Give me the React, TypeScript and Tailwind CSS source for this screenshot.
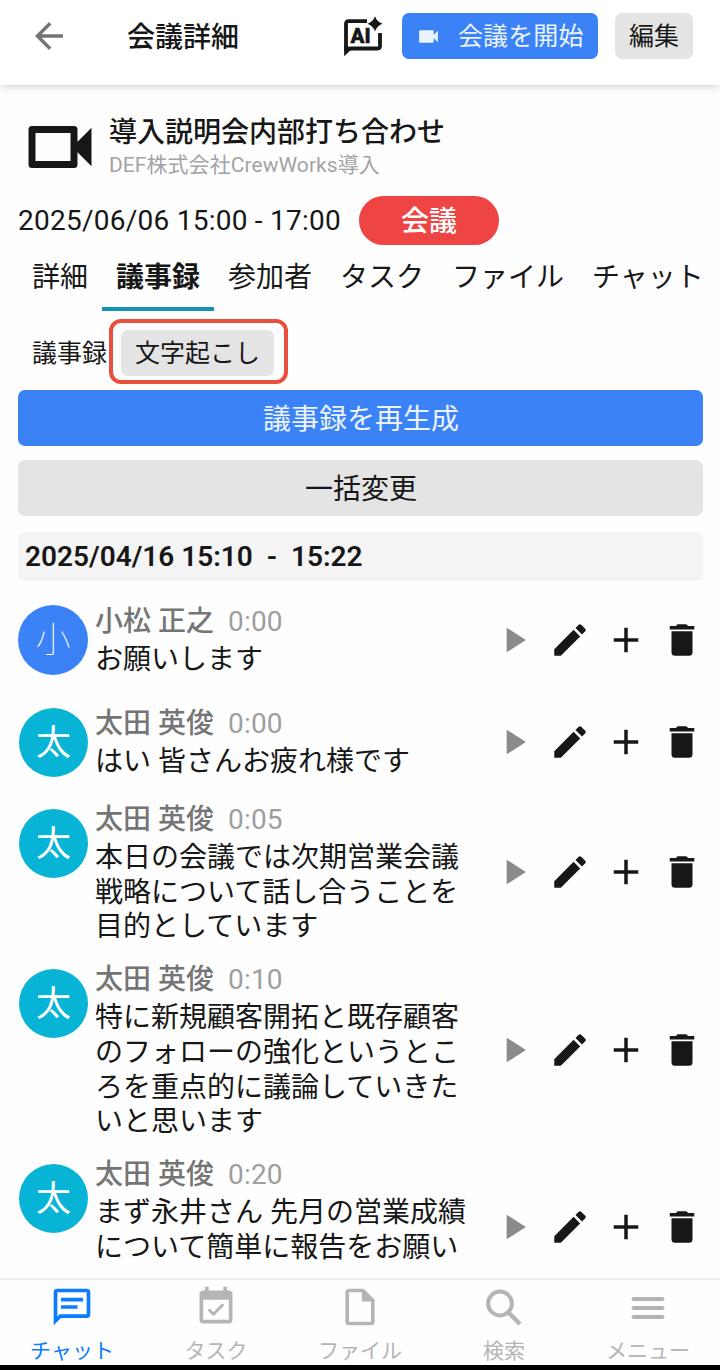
import clsx from 'clsx'

type Entry = {
  name: string
  time: string
  lines: string[]
  avatarClass: string
  initialClass?: string
  heightClass: string
}

const entries: Entry[] = [
  {
    name: '小松 正之',
    time: '0:00',
    lines: ['お願いします'],
    avatarClass: 'bg-[#3b82f6] h-[70px] w-[70px]',
    initialClass: 'font-thin',
    heightClass: 'h-[102px]',
  },
  {
    name: '太田 英俊',
    time: '0:00',
    lines: ['はい 皆さんお疲れ様です'],
    avatarClass: 'bg-[#08b4d5] mt-[17px] ml-px h-[69px] w-[69px]',
    heightClass: 'h-[102px]',
  },
  {
    name: '太田 英俊',
    time: '0:05',
    lines: ['本日の会議では次期営業会議', '戦略について話し合うことを', '目的としています'],
    avatarClass: 'bg-[#08b4d5] ml-px h-[69px] w-[69px]',
    heightClass: 'h-[160px]',
  },
  {
    name: '太田 英俊',
    time: '0:10',
    lines: [
      '特に新規顧客開拓と既存顧客',
      'のフォローの強化というとこ',
      'ろを重点的に議論していきた',
      'いと思います',
    ],
    avatarClass: 'bg-[#08b4d5] ml-px h-[69px] w-[69px]',
    heightClass: 'h-[195px]',
  },
  {
    name: '太田 英俊',
    time: '0:20',
    lines: ['まず永井さん 先月の営業成績', 'について簡単に報告をお願い', '\u00a0'],
    avatarClass: 'bg-[#08b4d5] ml-px h-[69px] w-[69px]',
    heightClass: 'h-[160px]',
  },
]

const tabs = [
  { label: '詳細' },
  { label: '議事録', active: true },
  { label: '参加者' },
  { label: 'タスク' },
  { label: 'ファイル' },
  { label: 'チャット' },
]

const icons = {
  back: 'M20 11H7.83l5.59-5.59L12 4l-8 8 8 8 1.41-1.41L7.83 13H20v-2z',
  video:
    'M17 10.5V7a1 1 0 0 0-1-1H4a1 1 0 0 0-1 1v10a1 1 0 0 0 1 1h12a1 1 0 0 0 1-1v-3.5l4 4v-11l-4 4z',
  videoOutline:
    'M15 8v8H5V8h10m1-2H4a1 1 0 0 0-1 1v10a1 1 0 0 0 1 1h12a1 1 0 0 0 1-1v-3.5l4 4v-11l-4 4V7a1 1 0 0 0-1-1z',
  play: 'M7.8 5v14l11-7z',
  pencil:
    'M20.71 7.04c.39-.39.39-1.04 0-1.41l-2.34-2.34c-.37-.39-1.02-.39-1.41 0l-1.84 1.83 3.75 3.75M3 17.25V21h3.75L17.81 9.93l-3.75-3.75L3 17.25z',
  plus: 'M19 13h-6v6h-2v-6H5v-2h6V5h2v6h6v2z',
  trash: 'M19 4h-3.5l-1-1h-5l-1 1H5v2h14M6 19a2 2 0 0 0 2 2h8a2 2 0 0 0 2-2V7H6v12z',
  chat: 'M20 2H4a2 2 0 0 0-2 2v18l4-4h14a2 2 0 0 0 2-2V4a2 2 0 0 0-2-2zm0 14H5.2L4 17.2V4h16v12zM6 7h12v2H6V7zm0 4h9v2H6v-2z',
  task: 'M19 19H5V8h14m0-5h-1V1h-2v2H8V1H6v2H5a2 2 0 0 0-2 2v14a2 2 0 0 0 2 2h14a2 2 0 0 0 2-2V5a2 2 0 0 0-2-2m-2.47 8.06L15.47 10l-4.88 4.88-2.12-2.12-1.06 1.06L10.59 17l5.94-5.94z',
  file: 'M14 2H6a2 2 0 0 0-2 2v16a2 2 0 0 0 2 2h12a2 2 0 0 0 2-2V8l-6-6zm4 18H6V4h7v5h5v11z',
}

function Icon({ path, className }: { path: string; className?: string }) {
  return (
    <svg viewBox="0 0 24 24" className={clsx('shrink-0', className)} fill="currentColor">
      <path d={path} />
    </svg>
  )
}

function AiIcon() {
  return (
    <svg viewBox="0 0 42 42" className="h-[42px] w-[42px] shrink-0">
      <path
        d="M24 6.200H5.500Q3 6.200 3 8.700V34L8.500 33.500H34.500Q37 33.500 37 31V18"
        fill="none"
        stroke="currentColor"
        strokeWidth="3.800"
      />
      <path d="M1.100 30V41.200L9.500 33.500z" fill="currentColor" />
      <path d="M32 1.200Q34 6.800 39.500 8.800Q34 10.800 32 16.400Q30 10.800 24.500 8.800Q30 6.800 32 1.200z" fill="currentColor" />
      <text
        x="7.500"
        y="28"
        fontSize="20.500"
        fontWeight="900"
        fill="currentColor"
        stroke="currentColor"
        strokeWidth="0.400"
      >
        AI
      </text>
    </svg>
  )
}

function Header() {
  return (
    <header className="relative z-10 flex h-[85px] shrink-0 items-start bg-white pt-[13px] shadow-[0_1px_8px_rgba(0,0,0,0.2)]">
      <Icon path={icons.back} className="mt-0.5 ml-7 h-[42px] w-[42px] text-[#757575]" />
      <h1 className="ml-[57px] pt-0.5 text-[28px] leading-[46px] font-medium">会議詳細</h1>
      <div className="ml-auto flex items-start pr-[27px]">
        <div className="mt-0.5 mr-[17px]">
          <AiIcon />
        </div>
        <button className="flex h-[46px] w-[196px] items-center rounded-[7px] bg-[#3b82f6] pl-[14px] text-[25px] text-white/90">
          <Icon path={icons.video} className="h-[25px] w-[25px]" />
          <span className="ml-[17px] pt-0.5 tracking-[0.1px] whitespace-nowrap">会議を開始</span>
        </button>
        <button className="ml-[17px] h-[46px] w-[78px] rounded-[7px] bg-[#e4e4e4] pt-0.5 text-[25px]">
          編集
        </button>
      </div>
    </header>
  )
}

function EntryRow({ entry }: { entry: Entry }) {
  return (
    <li className={clsx('flex shrink-0 items-center', entry.heightClass)}>
      <div
        className={clsx(
          'mt-4 flex shrink-0 items-center justify-center self-start rounded-full pt-[3px] text-[35px] text-white',
          entry.avatarClass,
          entry.initialClass,
        )}
      >
        {entry.name[0]}
      </div>
      <div className="ml-[7px] w-[384px] pb-0.5 whitespace-nowrap">
        <div className="mb-px flex text-[28px] leading-[41px]">
          <span className="font-medium text-[#757575]">{entry.name}</span>
          <span className="ml-[14px] tracking-[0.2px] text-[#9e9e9e]">{entry.time}</span>
        </div>
        {entry.lines.map((line) => (
          <p key={line} className="text-[28px] leading-[34.700px]">
            {line}
          </p>
        ))}
      </div>
      <div className={clsx('ml-auto flex gap-[14px]', entry.lines.length > 1 && 'pb-0.5')}>
        <Icon path={icons.play} className="h-[42px] w-[42px] text-[#8b8b8b]" />
        <Icon path={icons.pencil} className="h-[42px] w-[42px]" />
        <Icon path={icons.plus} className="h-[42px] w-[42px]" />
        <Icon path={icons.trash} className="h-[42px] w-[42px]" />
      </div>
    </li>
  )
}

function BottomNav() {
  const item = 'flex flex-1 flex-col items-center pt-[5px] text-[21px] leading-[45px] text-[#b5b5b5]'
  return (
    <nav className="flex h-[87px] shrink-0 border-t-2 border-[#ececec] bg-[#fefefe]">
      <div className={clsx(item, 'text-[#0a7cff]!')}>
        <Icon path={icons.chat} className="h-[44px] w-[44px]" />
        チャット
      </div>
      <div className={item}>
        <Icon path={icons.task} className="h-[44px] w-[44px]" />
        タスク
      </div>
      <div className={item}>
        <Icon path={icons.file} className="h-[44px] w-[44px]" />
        ファイル
      </div>
      <div className={item}>
        <svg viewBox="0 0 44 44" className="h-[44px] w-[44px] shrink-0" fill="none" stroke="currentColor">
          <circle cx="18" cy="18.500" r="11.900" strokeWidth="4" />
          <path d="M26 27L38 39" strokeWidth="4.500" />
        </svg>
        検索
      </div>
      <div className={item}>
        <svg viewBox="0 0 44 44" className="h-[44px] w-[44px] shrink-0" fill="none" stroke="currentColor">
          <path d="M7.500 14h29M7.500 23h29M7.500 32h29" strokeWidth="4" strokeLinecap="round" />
        </svg>
        メニュー
      </div>
    </nav>
  )
}

export default function App() {
  return (
    <div className="flex h-[1370px] w-[720px] flex-col overflow-hidden bg-[#fefefe] font-['Roboto','Noto_Sans_CJK_JP',sans-serif] text-[#171717]">
      <Header />
      <main className="flex min-h-0 flex-1 flex-col overflow-hidden px-[18px] pt-[19px]">
        <div className="flex h-[85px] shrink-0 items-center">
          <Icon path={icons.videoOutline} className="h-[84px] w-[84px]" />
          <div className="ml-[7px] pt-[3px]">
            <h2 className="text-[28px] leading-[34px] font-medium">導入説明会内部打ち合わせ</h2>
            <p className="text-[21px] leading-[30px] tracking-[0.06px] text-[#a3a3a3]">DEF株式会社CrewWorks導入</p>
          </div>
        </div>

        <div className="mt-[7px] flex h-[49px] shrink-0 items-center">
          <span className="w-[341px] text-[28px] tracking-[0.25px]">2025/06/06 15:00 - 17:00</span>
          <span className="flex h-[49px] w-[140px] items-center justify-center rounded-full bg-[#ef4444] pt-0.5 text-[28px] font-medium text-white">
            会議
          </span>
        </div>

        <div className="flex h-[66px] shrink-0 text-[28px] leading-[65px] whitespace-nowrap">
          {tabs.map((tab) => (
            <div
              key={tab.label}
              className={clsx('px-[14px]', tab.active && 'border-b-4 border-[#1691ae] font-bold')}
            >
              {tab.label}
            </div>
          ))}
        </div>

        <div className="mt-[8px] flex h-[65px] shrink-0 items-center pl-[14px] text-[25px]">
          <span className="w-[77px] pt-[5px] whitespace-nowrap">議事録</span>
          <div className="flex h-[65px] w-[179px] items-center justify-center rounded-[12px] border-4 border-[#e8503d] pt-0.5 pr-0.5">
            <button className="h-[46px] w-[153px] rounded-[7px] bg-[#e4e4e4] pt-[3px]">文字起こし</button>
          </div>
        </div>

        <button className="mt-[6px] h-14 w-[685px] shrink-0 rounded-[7px] bg-[#3b82f6] pt-[3px] pl-px text-[28px] text-white/90">
          議事録を再生成
        </button>
        <button className="mt-[14px] h-14 w-[685px] shrink-0 rounded-[7px] bg-[#e4e4e4] pt-[3px] pl-px text-[28px]">
          一括変更
        </button>
        <div className="mt-4 h-[49px] w-[685px] shrink-0 rounded-[7px] bg-[#f4f4f4] pl-[7px] text-[28px] leading-[49px] font-semibold whitespace-pre">
          {'2025/04/16 15:10  -  15:22'}
        </div>

        <ul className="mt-2 flex w-[685px] flex-col">
          {entries.map((entry, i) => (
            <EntryRow key={i} entry={entry} />
          ))}
        </ul>
      </main>
      <BottomNav />
      <div className="h-[5px] shrink-0 bg-black" />
    </div>
  )
}
